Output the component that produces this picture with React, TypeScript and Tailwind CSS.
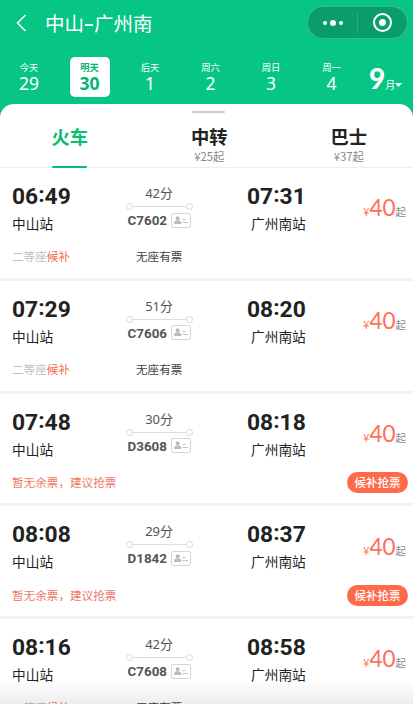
import React from "react";
import clsx from "clsx";

interface Day {
    label: string;
    date: string;
}

interface Train {
    depart: string;
    arrive: string;
    duration: string;
    code: string;
    soldOut?: boolean;
}

const days: Day[] = [
    { label: "今天", date: "29" },
    { label: "明天", date: "30" },
    { label: "后天", date: "1" },
    { label: "周六", date: "2" },
    { label: "周日", date: "3" },
    { label: "周一", date: "4" },
];

const tabs = [
    { name: "火车", price: "" },
    { name: "中转", price: "¥25起" },
    { name: "巴士", price: "¥37起" },
];

const trains: Train[] = [
    { depart: "06:49", arrive: "07:31", duration: "42", code: "C7602" },
    { depart: "07:29", arrive: "08:20", duration: "51", code: "C7606" },
    { depart: "07:48", arrive: "08:18", duration: "30", code: "D3608", soldOut: true },
    { depart: "08:08", arrive: "08:37", duration: "29", code: "D1842", soldOut: true },
    { depart: "08:16", arrive: "08:58", duration: "42", code: "C7608" },
];

export default function App() {
    return (
        <div className="relative h-[704px] w-[413px] overflow-hidden bg-[#07c585] font-['Noto_Sans_CJK_SC',sans-serif]">
            <TopBar />
            <DateStrip selected={1} />
            <main className="mt-[7px] rounded-t-[14px] bg-white">
                <TabBar />
                {trains.map((train) => (
                    <TrainRow key={train.code} train={train} />
                ))}
            </main>
            <div className="absolute inset-x-0 bottom-0 h-[26px] bg-linear-to-b from-black/0 to-black/7" />
        </div>
    );
}

function TopBar() {
    return (
        <header className="flex h-[46px] items-center pl-4 pr-[5px] text-white">
            <svg className="h-[18px] w-[11px]" viewBox="0 0 11 18" fill="none" stroke="currentColor" strokeWidth="1.5">
                <path d="M9.5 1 1.5 9l8 8" />
            </svg>
            <h1 className="ml-[18px] flex items-center text-[19.5px] leading-none">
                中山
                <span className="mx-[1px] mt-[3px] h-[2px] w-[8px] bg-white" />
                广州南
            </h1>
            <div className="mb-[1px] ml-auto flex h-[33px] w-[101px] items-center rounded-full border border-white/25 bg-[#089d69]">
                <div className="flex flex-1 items-center justify-center gap-[3px] border-r border-white/15 py-[7px]">
                    <i className="size-[4px] rounded-full bg-white" />
                    <i className="size-[6px] rounded-full bg-white" />
                    <i className="size-[4px] rounded-full bg-white" />
                </div>
                <div className="flex flex-1 justify-center">
                    <div className="flex size-[19px] items-center justify-center rounded-full border-2 border-white">
                        <i className="size-[7px] rounded-full bg-white" />
                    </div>
                </div>
            </div>
        </header>
    );
}

function DateStrip({ selected }: { selected: number }) {
    return (
        <nav className="flex h-[51px] items-end pl-[9px] text-white">
            {days.map((day, i) => (
                <div key={day.date} className="flex w-[60.5px] shrink-0">
                    <div
                        className={clsx(
                            "flex h-10 w-10 flex-col items-center rounded-[5px] pt-[5px]",
                            i === selected && "bg-white font-bold text-[#07b377]"
                        )}
                    >
                        <span className="text-[9.3px] leading-[10px]">{day.label}</span>
                        <span className="mt-[2px] font-['Noto_Sans'] text-[17.5px] leading-[18px]">{day.date}</span>
                    </div>
                </div>
            ))}
            <div className="-ml-[3px] flex h-10 items-baseline">
                <span className="font-[Lato] text-[28px] font-black leading-[43px]">9</span>
                <span className="text-[10px]">月</span>
                <svg className="mb-[2px] h-[4px] w-[7px] -translate-y-[2px]" viewBox="0 0 7 4" fill="currentColor">
                    <path d="M0 0h7L3.5 4z" />
                </svg>
            </div>
        </nav>
    );
}

function TabBar() {
    return (
        <div className="relative flex h-[64px] border-b border-[#eeeeee]">
            <div className="absolute left-[192px] top-[7px] h-[2px] w-[33px] rounded-full bg-[#cccccc]" />
            {tabs.map((tab, i) => (
                <div
                    key={tab.name}
                    className={clsx(
                        "relative flex w-[139.5px] shrink-0 flex-col items-center pt-[23px] first:-ml-[2px]",
                        i === 0 ? "text-[#07be70]" : "text-[#222222]"
                    )}
                >
                    <span className="text-[18.3px] font-bold leading-[18px]">{tab.name}</span>
                    <span className="mt-[5px] text-[11.3px] leading-[12px] text-[#888888]">{tab.price}</span>
                    {i === 0 && <i className="absolute -bottom-[1px] h-[2px] w-[35px] rounded-full bg-[#07be70]" />}
                </div>
            ))}
        </div>
    );
}

function TrainRow({ train }: { train: Train }) {
    return (
        <section className="h-[112.8px] border-b-[3px] border-[#f0f1f9] px-3 pt-[16px] text-[#222222]">
            <div className="flex h-[48px]">
                <div className="w-[106px]">
                    <Time value={train.depart} />
                    <p className="mt-[6px] text-[13.7px] leading-[16px]">中山站</p>
                </div>
                <RouteInfo duration={train.duration} code={train.code} />
                <div className="ml-[54px] w-[65px]">
                    <Time value={train.arrive} />
                    <p className="ml-[4px] mt-[6px] whitespace-nowrap text-[13.7px] leading-[16px]">广州南站</p>
                </div>
                <div className="-mr-[5px] ml-auto flex h-[49px] items-center whitespace-nowrap">
                    <p className="flex items-baseline leading-none text-[#ff6e55]">
                        <span className="text-[11px]">¥</span>
                        <span className="font-[Lato] text-[22.5px]">40</span>
                        <span className="text-[10.5px] text-[#888888]">起</span>
                    </p>
                </div>
            </div>
            <div className="mt-[14px] flex h-[22px] items-center text-[11.6px]">
                {train.soldOut ? (
                    <>
                        <span className="text-[#f07866]">暂无余票，建议抢票</span>
                        <button className="-mr-[7px] ml-auto h-[21px] w-[61px] rounded-full bg-[#fd6b4b] text-[11.5px] font-medium leading-none text-white">
                            候补抢票
                        </button>
                    </>
                ) : (
                    <>
                        <span className="w-[124px] text-[#c0c0c0]">
                            二等座<span className="text-[#f46a48]">候补</span>
                        </span>
                        <span className="text-[#444444]">无座有票</span>
                    </>
                )}
            </div>
        </section>
    );
}

function Time({ value }: { value: string }) {
    const [hour, minute] = value.split(":");

    return (
        <p className="flex font-[Roboto] text-[22.8px] font-bold leading-[25px]">
            {hour}
            <span className="-mt-[2px]">:</span>
            {minute}
        </p>
    );
}

function RouteInfo({ duration, code }: { duration: string; code: string }) {
    return (
        <div className="ml-[7px] flex w-[68px] flex-col items-center pt-[1px]">
            <p className="flex items-baseline text-[12.8px] leading-[16px] text-[#555555]">
                <span className="font-['Noto_Sans'] text-[13px]">{duration}</span>分
            </p>
            <div className="mt-[2px] flex h-[7px] w-[67px] items-center">
                <i className="size-[7px] rounded-full border border-[#d8d8d8]" />
                <i className="h-[1px] flex-1 bg-[#dedede]" />
                <i className="size-[7px] rounded-full border border-[#d8d8d8]" />
            </div>
            <div className="mt-[2px] flex w-[63px] items-center justify-between">
                <span className="pt-[1px] font-[Roboto] text-[13.4px] font-bold leading-[15px] text-[#555555]">{code}</span>
                <IdCardIcon />
            </div>
        </div>
    );
}

function IdCardIcon() {
    return (
        <svg className="h-[15px] w-[20px] shrink-0" viewBox="0 0 20 15" fill="none">
            <rect x=".5" y=".5" width="19" height="14" rx="1.5" stroke="#d5d5d5" />
            <circle cx="6.7" cy="5.3" r="2" fill="#bbbbbb" />
            <path d="M3.2 11V9.5q0-2 3.5-2.2 3.5.2 3.5 2.2V11z" fill="#bbbbbb" />
            <path d="M11.5 6.5h3M11.5 9.5h5.5" stroke="#c4c4c4" />
        </svg>
    );
}
